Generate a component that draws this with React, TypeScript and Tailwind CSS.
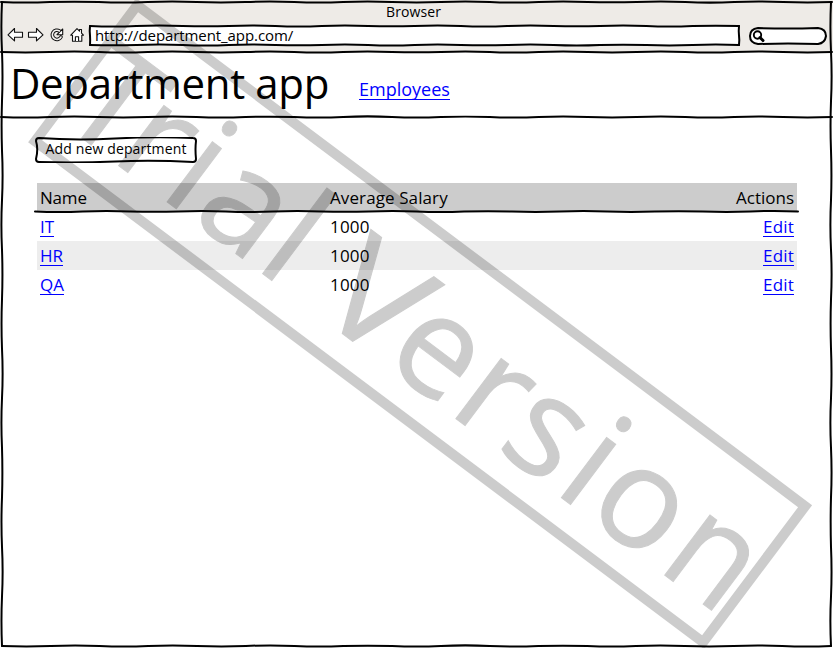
import React from "react";

type Pt = [number, number];

/** Hand-drawn line: a gentle, deterministic wobble between two points. */
function wobble([x1, y1]: Pt, [x2, y2]: Pt, seed = 1, amp = 0.6): string {
  const len = Math.hypot(x2 - x1, y2 - y1);
  const n = Math.max(2, Math.round(len / 48));
  const nx = -(y2 - y1) / len;
  const ny = (x2 - x1) / len;
  const at = (t: number, o: number): string =>
    `${(x1 + (x2 - x1) * t + nx * o).toFixed(2)} ${(y1 + (y2 - y1) * t + ny * o).toFixed(2)}`;
  let d = `M${at(0, 0)}`;
  for (let i = 0; i < n; i++) {
    const off = (i % 2 ? -1 : 1) * amp * (0.7 + 0.6 * Math.abs(Math.sin(seed * 7 + i * 2.3)));
    d += ` Q${at((i + 0.5) / n, off * 1.6)} ${at((i + 1) / n, 0)}`;
  }
  return d;
}

function Line({ from, to, seed, amp }: { from: Pt; to: Pt; seed?: number; amp?: number }) {
  return <path d={wobble(from, to, seed, amp)} fill="none" stroke="#000" strokeWidth="2" strokeLinecap="round" />;
}

function WindowFrame() {
  return (
    <svg className="pointer-events-none absolute inset-0" width="833" height="648">
      <Line from={[1, 2]} to={[832, 2]} seed={1} />
      <Line from={[2, 2]} to={[2, 646]} seed={2} />
      <Line from={[831, 2]} to={[831, 646]} seed={3} />
      <Line from={[2, 646]} to={[831, 646]} seed={4} />
      <Line from={[1, 52]} to={[832, 52]} seed={5} />
      <Line from={[1, 117]} to={[832, 117]} seed={6} />
    </svg>
  );
}

const TRIAL: [string, number][] = [["T", 4.5], ["r", 71.5], ["i", 132], ["a", 171.5], ["l", 251.5]];
const ERSIO: [string, number][] = [["e", 411.5], ["r", 493], ["s", 553], ["i", 625], ["o", 663.5]];

function Letters({ glyphs }: { glyphs: [string, number][] }) {
  return (
    <text y="144.5" x={glyphs.map((g) => g[1]).join(" ")}>
      {glyphs.map((g) => g[0]).join("")}
    </text>
  );
}

function Watermark() {
  return (
    <svg className="pointer-events-none absolute inset-0 opacity-[0.196]" width="833" height="648">
      <g
        className="font-['Open_Sans',sans-serif] text-[141px]"
        transform="matrix(0.8 0.6 -0.6 0.8 138.5 0)"
        stroke="#000"
        strokeWidth="1"
      >
        <rect x="2" y="5" width="835" height="170" fill="none" strokeWidth="10" />
        <Letters glyphs={TRIAL} />
        <text transform="translate(323.500 144.500) scale(1.1 1)">V</text>
        <Letters glyphs={ERSIO} />
        <text transform="translate(755 144.500) scale(0.93 1)">n</text>
      </g>
    </svg>
  );
}

function NavIcons() {
  return (
    <svg width="80" height="20" viewBox="5 25 80 20" fill="#fff" stroke="#111" strokeWidth="1.1" strokeLinejoin="round">
      <path d="M8 34.800l6.500-6.300v3.700h8v5h-8v3.700z" />
      <path d="M43 34.800l-6.500-6.300v3.700h-8v5h8v3.700z" />
      <path d="M59.500 31A4.600 4.600 0 1 0 61 37" fill="none" strokeWidth="3.600" strokeLinecap="round" />
      <path d="M57 34.700h5.700v-5.700z" />
      <path d="M59.500 31A4.600 4.600 0 1 0 61 37" fill="none" stroke="#f4f2f0" strokeWidth="1.600" strokeLinecap="round" />
      <path d="M70.800 35.200l6.200-6.500 2.500 2.500v-1.700h2v3.700l2 2h-1.700v6H72.500v-6z" />
      <path d="M75.400 41v-4.300h3.200v4.300" />
    </svg>
  );
}

function Toolbar() {
  return (
    <header className="h-[52px] bg-[#eeebe7]">
      <div className="flex h-[25px] justify-center pt-[3px] text-[14px] leading-[18px]">
        <span className="-ml-[6px] tracking-[0.1px]">Browser</span>
      </div>
      <div className="flex items-start pl-[5px]">
        <NavIcons />
        <div className="relative ml-[5px] h-[21px] w-[650px] bg-white pl-[5px] text-[15px] leading-[21px] tracking-[-0.08px]">
          http://department_app.com/
          <svg className="absolute inset-0 overflow-visible" width="650" height="21">
            <Line from={[0, 1]} to={[649, 1]} seed={7} amp={0.5} />
            <Line from={[649, 1]} to={[649, 20]} seed={8} amp={0.3} />
            <Line from={[0, 20]} to={[649, 20]} seed={9} amp={0.5} />
            <Line from={[0, 1]} to={[0, 20]} seed={10} amp={0.3} />
          </svg>
        </div>
        <svg className="ml-[8px] mt-[2px]" width="80" height="20" fill="none" stroke="#000" strokeWidth="2">
          <path d="M10 1Q38 2 70 1Q78 2 78 9Q77 16 70 17Q40 16 10 17Q2 16 2 9Q2 2 10 1Z" fill="#fff" />
          <circle cx="9.500" cy="8" r="3.700" strokeWidth="1.900" />
          <path d="M12 10.500l3 3" strokeWidth="3" strokeLinecap="round" />
        </svg>
      </div>
    </header>
  );
}

const link = "h-[20px] border-b border-[#0000ff] text-[#0000ff]";

const ROWS = [
  { name: "IT", salary: "1000" },
  { name: "HR", salary: "1000" },
  { name: "QA", salary: "1000" },
];

function DepartmentTable() {
  return (
    <section className="relative ml-[37px] mt-[20px] w-[760px] text-[17px]">
      <div className="grid h-[29px] grid-cols-[290px_1fr_auto] bg-[#ccc] px-[3px] leading-[29px]">
        <span className="tracking-[-0.2px]">Name</span>
        <span className="tracking-[0.1px]">Average Salary</span>
        <span>Actions</span>
      </div>
      {ROWS.map((r) => (
        <div key={r.name} className="grid h-[29px] grid-cols-[290px_1fr_auto] items-start px-[3px] pt-[5px] odd:bg-[#ededed]">
          <div className="flex"><a className={`${link} leading-[20px]`}>{r.name}</a></div>
          <span className="leading-[20px] tracking-[0.2px]">{r.salary}</span>
          <a className={`${link} leading-[20px] tracking-[0.2px]`}>Edit</a>
        </div>
      ))}
      <svg className="absolute -left-[2px] top-0 overflow-visible" width="764" height="30">
        <Line from={[0, 28.500]} to={[763, 28.500]} seed={11} amp={0.5} />
      </svg>
    </section>
  );
}

export default function App() {
  return (
    <div className="relative h-[648px] w-[833px] overflow-hidden bg-white font-['Open_Sans',sans-serif] text-black">
      <Toolbar />
      <div className="flex h-[65px] items-start pl-[10px]">
        <h1 className="w-[349px] whitespace-nowrap pt-[1px] text-[42px] leading-[60px] tracking-[-0.36px]">Department app</h1>
        <a className={`${link} mt-[28px] text-[18px] leading-[18px]`}>Employees</a>
      </div>
      <div className="pl-[35px] pt-[20px]">
        <button className="relative flex h-[26px] w-[162px] justify-center text-[14px] leading-[24px] tracking-[0.15px]">
          Add new department
          <svg className="absolute inset-0" width="162" height="26" fill="none" stroke="#000" strokeWidth="2">
            <path d="M4 1Q40 3.500 80 1.500T158 1Q161 1 161 4Q160 12 161 22Q161 25 158 25Q118 23 80 24.500T4 25Q1 25 1 22Q3.500 12 1 4Q1 1 4 1Z" />
          </svg>
        </button>
      </div>
      <DepartmentTable />
      <Watermark />
      <WindowFrame />
    </div>
  );
}
